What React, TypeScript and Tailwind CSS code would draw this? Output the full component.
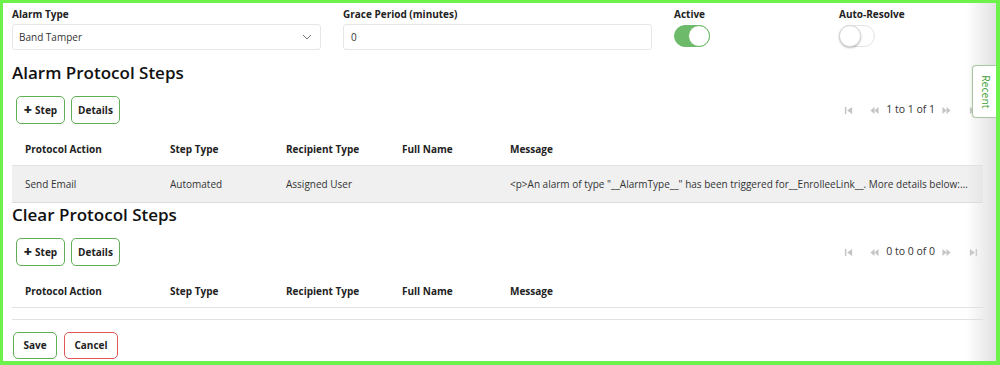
import { useState } from "react";

function Toggle({ on }: { on: boolean }) {
  return (
    <div
      className={`relative w-[36px] h-[22px] rounded-full border ${on ? "bg-[#6dbb6a] border-[#6dbb6a]" : "bg-white border-[#e4e4e4]"}`}
    >
      <div
        className={`absolute top-[-1px] w-[22px] h-[22px] rounded-full bg-white border ${on ? "right-[-1px] border-[#6dbb6a]" : "left-[-1px] border-[#d8d8d8] shadow-[0_1px_2px_rgba(0,0,0,0.25)]"}`}
      />
    </div>
  );
}

function PagerIcon({ kind }: { kind: "first" | "prev" | "next" | "last" }) {
  const c = "#c4c4c4";
  return (
    <svg width="9" height="9" viewBox="0 0 10 10" className="shrink-0">
      {kind === "first" && (
        <>
          <rect x="1" y="1" width="1.6" height="8" fill={c} />
          <path d="M9 1 L3.5 5 L9 9 Z" fill={c} />
        </>
      )}
      {kind === "prev" && (
        <>
          <path d="M5 1 L0.5 5 L5 9 Z" fill={c} />
          <path d="M9.5 1 L5 5 L9.5 9 Z" fill={c} />
        </>
      )}
      {kind === "next" && (
        <>
          <path d="M0.5 1 L5 5 L0.5 9 Z" fill={c} />
          <path d="M5 1 L9.5 5 L5 9 Z" fill={c} />
        </>
      )}
      {kind === "last" && (
        <>
          <path d="M1 1 L6.5 5 L1 9 Z" fill={c} />
          <rect x="7.4" y="1" width="1.6" height="8" fill={c} />
        </>
      )}
    </svg>
  );
}

function Pager({ text }: { text: string }) {
  return (
    <div className="flex items-center text-[10.5px] text-[#333] pr-[5px]">
      <PagerIcon kind="first" />
      <div className="w-[17px]" />
      <PagerIcon kind="prev" />
      <span className="mx-[7px]">{text}</span>
      <PagerIcon kind="next" />
      <div className="w-[18px]" />
      <PagerIcon kind="last" />
    </div>
  );
}

function GreenButton({ children, w }: { children: React.ReactNode; w: string }) {
  return (
    <button
      className={`${w} h-[28px] rounded-[5px] border-[1.5px] border-[#5fae55] text-[10px] font-bold text-[#222] flex items-center justify-center gap-[3px]`}
    >
      {children}
    </button>
  );
}

const columns = ["Protocol Action", "Step Type", "Recipient Type", "Full Name", "Message"];
const colWidths = ["w-[145px]", "w-[116px]", "w-[116px]", "w-[108px]", "flex-1 min-w-0"];

function ProtocolSection({
  title,
  pager,
  rows,
}: {
  title: string;
  pager: string;
  rows: string[][];
}) {
  return (
    <div className="w-[971px]">
      <h2 className="text-[17px] font-semibold text-[#111] leading-[24px]">{title}</h2>
      <div className="flex items-center justify-between mt-[11px] pl-[4px]">
        <div className="flex gap-[6px]">
          <GreenButton w="w-[49px]">
            <span className="text-[14px] leading-none font-black">+</span>Step
          </GreenButton>
          <GreenButton w="w-[49px]">Details</GreenButton>
        </div>
        <Pager text={pager} />
      </div>
      <div className="mt-[9px] text-[10px]">
        <div className="flex items-center h-[33px] border-b border-[#e2e2e2] font-bold text-[#222] pl-[13px]">
          {columns.map((c, i) => (
            <div key={c} className={colWidths[i]}>
              {c}
            </div>
          ))}
        </div>
        {rows.length === 0 && <div className="h-[12px] border-b border-[#e2e2e2]" />}
        {rows.map((r, ri) => (
          <div
            key={ri}
            className="flex items-center h-[37px] bg-[#f0f0f1] border-b border-[#dcdcdc] text-[#333] pl-[13px]"
          >
            {r.map((cell, i) => (
              <div key={i} className={`${colWidths[i]} truncate ${i === 4 ? "pr-[12px]" : "pr-[14px]"}`}>
                {cell}
              </div>
            ))}
          </div>
        ))}
      </div>
    </div>
  );
}

export default function App() {
  const [active] = useState(true);

  return (
    <div
      className="relative w-[1000px] h-[365px] overflow-hidden bg-white border-t-[3px] border-l-[3px] border-r-4 border-b-4 border-[#6cf24a] text-[#222]"
      style={{ fontFamily: '"Open Sans", "Noto Sans", sans-serif' }}
    >
      <div className="pl-[9px] pt-[4px]">
        {/* Top fields */}
        <div className="flex gap-[22px]">
          <div className="w-[309px]">
            <label className="block text-[10px] font-bold leading-[14px] mb-[3px]">Alarm Type</label>
            <div className="h-[26px] border border-[#e6e6e6] rounded-[3px] flex items-center justify-between px-[6px] text-[10px] text-[#333]">
              <span>Band Tamper</span>
              <svg width="10" height="6" viewBox="0 0 10 6" className="mr-[2px]">
                <path d="M1 1 L5 5 L9 1" fill="none" stroke="#777" strokeWidth="1" />
              </svg>
            </div>
          </div>
          <div className="w-[309px]">
            <label className="block text-[10px] font-bold leading-[14px] mb-[3px]">Grace Period (minutes)</label>
            <div className="h-[26px] border border-[#e6e6e6] rounded-[3px] flex items-center px-[7px] text-[10px] text-[#333]">
              0
            </div>
          </div>
          <div className="w-[143px]">
            <label className="block text-[10px] font-bold leading-[14px] mb-[4px]">Active</label>
            <Toggle on={active} />
          </div>
          <div className="w-[143px]">
            <label className="block text-[10px] font-bold leading-[14px] mb-[4px]">Auto-Resolve</label>
            <Toggle on={false} />
          </div>
        </div>

        <div className="mt-[11px]">
          <ProtocolSection
            title="Alarm Protocol Steps"
            pager="1 to 1 of 1"
            rows={[
              [
                "Send Email",
                "Automated",
                "Assigned User",
                "",
                '<p>An alarm of type "__AlarmType__" has been triggered for__EnrolleeLink__. More details below:</p><p>Alarm Time: __AlarmTime__</p>',
              ],
            ]}
          />
        </div>
        <ProtocolSection title="Clear Protocol Steps" pager="0 to 0 of 0" rows={[]} />

        <div className="flex gap-[7px] mt-[12px] pl-[1px]">
          <button className="w-[44px] h-[27px] rounded-[5px] border-[1.5px] border-[#5fae55] text-[10px] font-bold">
            Save
          </button>
          <button className="w-[54px] h-[27px] rounded-[5px] border-[1.5px] border-[#e05656] text-[10px] font-bold">
            Cancel
          </button>
        </div>
      </div>

      {/* right edge shade */}
      <div className="pointer-events-none absolute right-0 top-0 bottom-0 w-[30px] bg-gradient-to-r from-white/0 to-[#dedede]/90" />

      {/* Recent side tab */}
      <div className="absolute z-10 right-0 top-[62px] w-[24px] h-[53px] bg-white border border-r-0 border-[#a9c7a3] rounded-l-[4px] flex items-center justify-center shadow-[-1px_0_2px_rgba(0,0,0,0.05)]">
        <span className="rotate-90 text-[10.5px] text-[#3f9f3a] whitespace-nowrap">Recent</span>
      </div>
    </div>
  );
}
